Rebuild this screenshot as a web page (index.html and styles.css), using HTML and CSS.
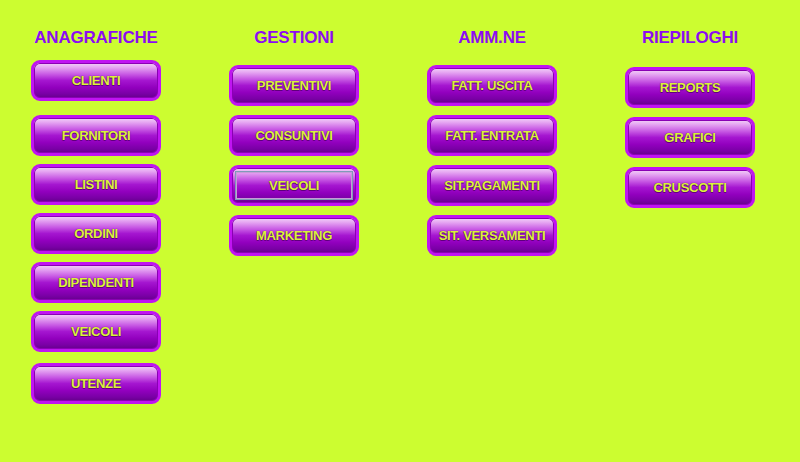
FILE: index.html
```html
<!DOCTYPE html>
<html lang="it">
<head>
<meta charset="utf-8">
<title>Menu</title>
<link rel="stylesheet" href="styles.css">
</head>
<body>
<div class="menu">
  <section class="col col1">
    <h2 class="head">ANAGRAFICHE</h2>
    <div class="btns">
      <button class="btn first">CLIENTI</button>
      <button class="btn">FORNITORI</button>
      <button class="btn">LISTINI</button>
      <button class="btn">ORDINI</button>
      <button class="btn">DIPENDENTI</button>
      <button class="btn">VEICOLI</button>
      <button class="btn last">UTENZE</button>
    </div>
  </section>
  <section class="col col2">
    <h2 class="head">GESTIONI</h2>
    <div class="btns">
      <button class="btn">PREVENTIVI</button>
      <button class="btn">CONSUNTIVI</button>
      <button class="btn focused">VEICOLI</button>
      <button class="btn">MARKETING</button>
    </div>
  </section>
  <section class="col col3">
    <h2 class="head">AMM.NE</h2>
    <div class="btns">
      <button class="btn">FATT. USCITA</button>
      <button class="btn">FATT. ENTRATA</button>
      <button class="btn">SIT.PAGAMENTI</button>
      <button class="btn">SIT. VERSAMENTI</button>
    </div>
  </section>
  <section class="col col4">
    <h2 class="head">RIEPILOGHI</h2>
    <div class="btns">
      <button class="btn">REPORTS</button>
      <button class="btn">GRAFICI</button>
      <button class="btn">CRUSCOTTI</button>
    </div>
  </section>
</div>
</body>
</html>
```
FILE: styles.css
```css
html, body {
  margin: 0;
  padding: 0;
  background: #ccfd30;
  height: 100%;
}
body {
  font-family: "Liberation Sans", Arial, sans-serif;
  overflow: hidden;
}
.menu {
  display: flex;
  padding: 28px 0 0 31px;
  gap: 68px;
}
.col {
  width: 130px;
  display: flex;
  flex-direction: column;
}
.head {
  margin: 0;
  height: 20px;
  line-height: 20px;
  font-size: 17px;
  font-weight: bold;
  letter-spacing: -0.2px;
  color: #8c0cf2;
  text-align: center;
}
.btns {
  display: flex;
  flex-direction: column;
  gap: 9px;
}
.col1 .btns { margin-top: 12px; gap: 8px; }
.col1 .first { margin-bottom: 6px; }
.col1 .last { margin-top: 3px; }
.col2 .btns, .col3 .btns { margin-top: 17px; }
.col4 .btns { margin-top: 19px; }
.btn {
  position: relative;
  width: 130px;
  height: 41px;
  box-sizing: border-box;
  border: 3px solid #c014f2;
  border-radius: 9px;
  padding: 0;
  background: linear-gradient(to bottom,
    #f2d2f8 0%,
    #e6a8f2 12%,
    #c85ae4 32%,
    #a516d0 50%,
    #9200be 70%,
    #7a00a6 88%,
    #66008c 100%);
  box-shadow: inset 0 0 0 1px #8a00b4;
  color: #dcf23a;
  font-family: "Liberation Sans", Arial, sans-serif;
  font-weight: bold;
  font-size: 13px;
  letter-spacing: -0.3px;
  text-shadow: 0 0 1px #50006c, 0 1px 0 #60007e;
  cursor: pointer;
}
.focused::after {
  content: "";
  position: absolute;
  left: 3px;
  right: 3px;
  top: 3px;
  bottom: 3px;
  border: 1px solid #7f9ab8;
  box-shadow: inset 0 0 0 1px #c89ad8;
  pointer-events: none;
}
```
